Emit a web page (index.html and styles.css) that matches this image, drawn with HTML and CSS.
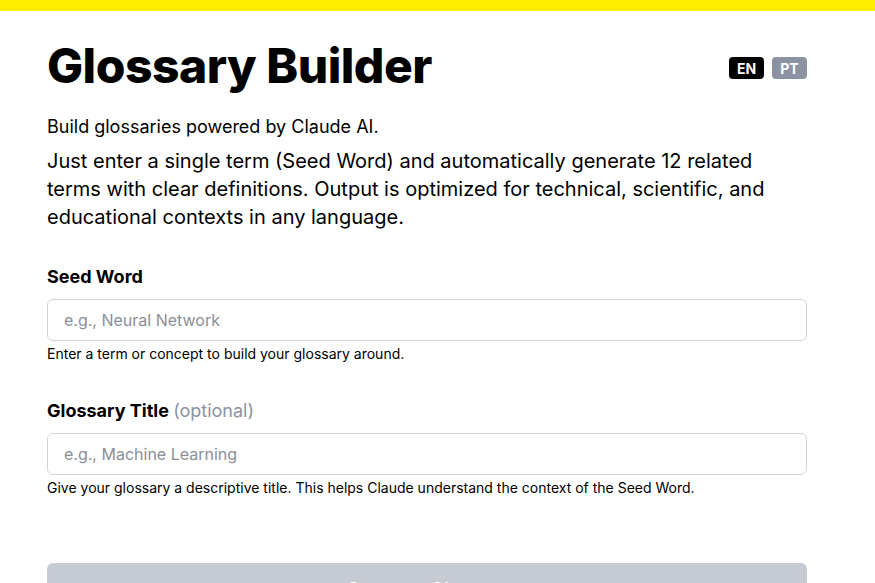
FILE: index.html
```html
<!DOCTYPE html>
<html lang="en">
<head>
  <meta charset="UTF-8">
  <meta name="viewport" content="width=device-width, initial-scale=1.0">
  <title>Glossary Builder</title>
  <link rel="stylesheet" href="styles.css">
</head>
<body>
    <div class="top-bar"></div>

    <div class="container">
        <!-- Header -->
        <div class="header">
            <h1>Glossary Builder</h1>
            <div class="lang-switch">
                <button type="button" class="lang active">EN</button>
                <button type="button" class="lang">PT</button>
            </div>
        </div>

        <p class="lead">Build glossaries powered by Claude AI.</p>
        <p class="intro">Just enter a single term (Seed Word) and automatically generate 12 related terms with clear definitions. Output is optimized for technical, scientific, and educational contexts in any language.</p>

        <!-- Form -->
        <form id="glossary-form">
            <div class="field">
                <label for="seed-word">Seed Word</label>
                <input type="text" id="seed-word" name="seed_word" placeholder="e.g., Neural Network">
                <p class="hint">Enter a term or concept to build your glossary around.</p>
            </div>

            <div class="field">
                <label for="glossary-title">Glossary Title <span class="optional">(optional)</span></label>
                <input type="text" id="glossary-title" name="glossary_title" placeholder="e.g., Machine Learning">
                <p class="hint">Give your glossary a descriptive title. This helps Claude understand the context of the Seed Word.</p>
            </div>

            <button type="button" class="generate" disabled>Generate Glossary</button>
        </form>
    </div>
</body>
</html>
```

FILE: styles.css
```css
/* General Styling */
body {
    font-family: 'Inter', 'Liberation Sans', sans-serif;
    background-color: #ffffff;
    color: #000000;
    margin: 0;
    padding: 0;
}

.top-bar {
    height: 11px;
    background-color: #ffee00;
}

.container {
    width: 760px;
    margin: 0 47px;
}

/* Header */
.header {
    display: flex;
    justify-content: space-between;
    align-items: center;
    padding-top: 26px;
}

h1 {
    margin: 0;
    font-size: 48px;
    font-weight: 800;
    line-height: 58px;
    letter-spacing: -0.5px;
}

.lang-switch {
    display: flex;
    gap: 8px;
    margin-top: 4px;
}

.lang {
    width: 35px;
    height: 22px;
    padding: 0;
    border: none;
    border-radius: 4px;
    background-color: #8b93a3;
    color: #ffffff;
    font-family: inherit;
    font-size: 14px;
    font-weight: 700;
    cursor: pointer;
}

.lang.active {
    background-color: #000000;
}

.lead {
    margin: 18px 0 0;
    font-size: 18px;
    line-height: 28px;
}

.intro {
    margin: 6px 0 0;
    font-size: 20px;
    line-height: 28px;
}

/* Form */
#glossary-form {
    margin-top: 32px;
}

.field {
    margin-bottom: 33px;
}

label {
    display: block;
    font-size: 18px;
    font-weight: 700;
    line-height: 28px;
    margin-bottom: 8px;
}

.optional {
    color: #8b93a3;
    font-weight: 400;
}

input {
    display: block;
    box-sizing: border-box;
    width: 100%;
    height: 42px;
    padding: 0 16px;
    border: 1px solid #d1d5db;
    border-radius: 6px;
    font-family: inherit;
    font-size: 16px;
    color: #111111;
}

input::placeholder {
    color: #8a8f98;
}

.hint {
    margin: 3px 0 0;
    font-size: 14px;
    line-height: 20px;
}

.generate {
    display: block;
    width: 100%;
    margin-top: 65px;
    padding: 16px 20px;
    border: none;
    border-radius: 6px;
    background-color: #c5cad3;
    color: #ffffff;
    font-family: inherit;
    font-size: 18px;
    font-weight: 600;
}
```
